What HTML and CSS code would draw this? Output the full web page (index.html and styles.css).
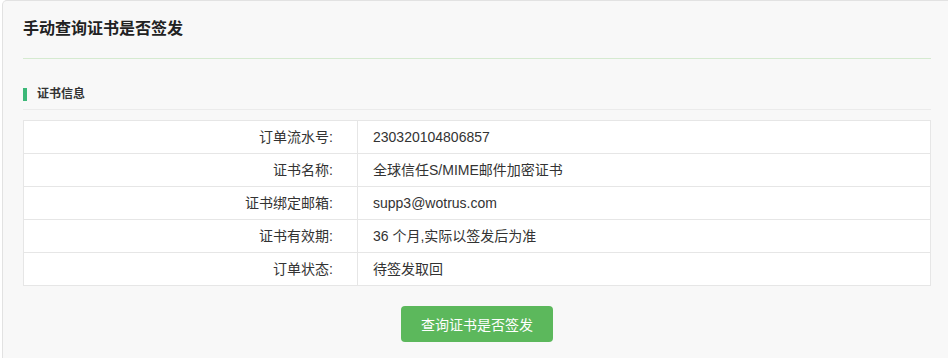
FILE: index.html
```html
<!DOCTYPE html>
<html lang="zh-CN">
<head>
<meta charset="utf-8">
<title>手动查询证书是否签发</title>
<link rel="stylesheet" href="styles.css">
</head>
<body>
<div class="panel">
  <div class="panel-title">手动查询证书是否签发</div>
  <div class="section-head"><span class="bar"></span>证书信息</div>
  <table class="info">
    <tr><td class="label">订单流水号:</td><td class="value">230320104806857</td></tr>
    <tr><td class="label">证书名称:</td><td class="value">全球信任S/MIME邮件加密证书</td></tr>
    <tr><td class="label">证书绑定邮箱:</td><td class="value">supp3@wotrus.com</td></tr>
    <tr><td class="label">证书有效期:</td><td class="value">36 个月,实际以签发后为准</td></tr>
    <tr><td class="label">订单状态:</td><td class="value">待签发取回</td></tr>
  </table>
  <div class="actions"><button class="btn">查询证书是否签发</button></div>
</div>
</body>
</html>
```
FILE: styles.css
```css
html, body {
  margin: 0;
  padding: 0;
  background: #ffffff;
  font-family: "Liberation Sans", "Noto Sans CJK SC", sans-serif;
  overflow: hidden;
}
.panel {
  box-sizing: border-box;
  margin-left: 2px;
  width: 950px;
  height: 358px;
  background: #f8f8f8;
  border: 1px solid #e2e2e2;
  border-bottom: none;
  border-radius: 5px 5px 0 0;
  padding: 0 20px;
}
.panel-title {
  font-size: 16px;
  font-weight: bold;
  color: #222;
  line-height: 24px;
  padding: 16px 0 17px;
  border-bottom: 1px solid #d5ead0;
}
.section-head {
  margin-top: 25px;
  font-size: 12px;
  font-weight: bold;
  color: #333;
  line-height: 20px;
  padding-bottom: 5px;
  border-bottom: 1px solid #ebebeb;
  display: flex;
  align-items: center;
}
.bar {
  display: inline-block;
  width: 4px;
  height: 13px;
  background: #3cb878;
  margin-right: 10px;
}
.info {
  margin-top: 10px;
  width: 100%;
  border-collapse: collapse;
  background: #fff;
  font-size: 14px;
  color: #333;
}
.info td {
  border: 1px solid #e6e6e6;
  height: 32px;
  padding: 0;
  line-height: 20px;
}
.label {
  width: 334px;
  text-align: right;
  padding-right: 24px !important;
  box-sizing: border-box;
}
.value {
  padding-left: 15px !important;
}
.actions {
  margin-top: 20px;
  display: flex;
  justify-content: center;
}
.btn {
  width: 152px;
  height: 36px;
  background: #5cb85c;
  color: #fff;
  border: none;
  border-radius: 4px;
  font-family: "Liberation Sans", "Noto Sans CJK SC", sans-serif;
  font-size: 14px;
  padding: 0;
}
```
